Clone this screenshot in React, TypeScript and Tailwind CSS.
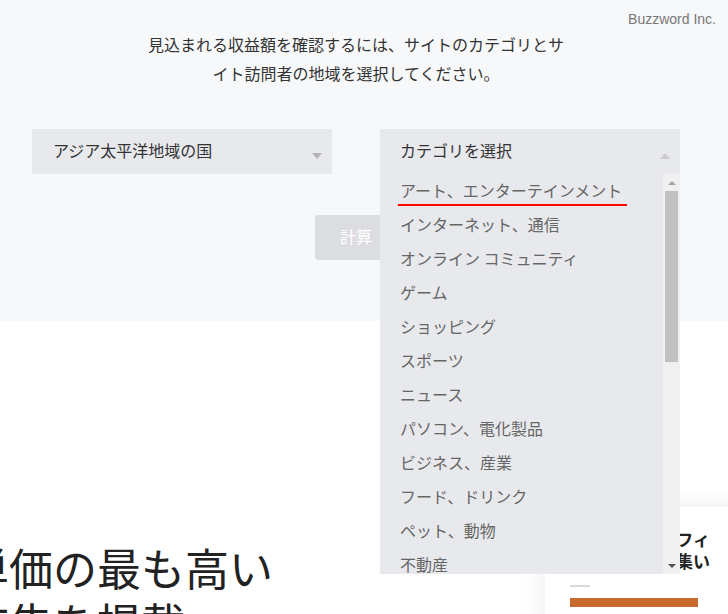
import React from 'react';

const categories = [
  'アート、エンターテインメント',
  'インターネット、通信',
  'オンライン コミュニティ',
  'ゲーム',
  'ショッピング',
  'スポーツ',
  'ニュース',
  'パソコン、電化製品',
  'ビジネス、産業',
  'フード、ドリンク',
  'ペット、動物',
  '不動産',
];

function Caret({ up, color }: { up?: boolean; color: string }) {
  return (
    <svg width="10" height="6" viewBox="0 0 10 6" className="shrink-0">
      <polygon points={up ? '0,6 10,6 5,0' : '0,0 10,0 5,6'} fill={color} />
    </svg>
  );
}

function ScrollTrack() {
  return (
    <div className="w-[17px] shrink-0 bg-[#f0f0f0] flex flex-col">
      <div className="h-[17px] flex items-center justify-center">
        <svg width="8" height="4" viewBox="0 0 8 4">
          <polygon points="0,4 8,4 4,0" fill="#a3a3a3" />
        </svg>
      </div>
      <div className="mx-[2px] h-[171px] bg-[#c1c1c1]" />
      <div className="flex-1" />
      <div className="h-[17px] flex items-center justify-center">
        <svg width="8" height="4" viewBox="0 0 8 4">
          <polygon points="0,0 8,0 4,4" fill="#505050" />
        </svg>
      </div>
    </div>
  );
}

export default function App() {
  return (
    <div
      className="relative w-[728px] h-[614px] overflow-hidden bg-white"
      style={{ fontFamily: '"Noto Sans CJK JP", "Noto Sans", sans-serif' }}
    >
      {/* watermark */}
      <div
        className="absolute top-[10px] right-[12px] text-[14px] leading-[18px] text-[#777]"
        style={{ fontFamily: '"Liberation Sans", Arial, sans-serif' }}
      >
        Buzzword Inc.
      </div>

      {/* Calculator panel */}
      <div className="h-[321px] bg-[#f7f8fa]">
        <div className="w-[712px] flex flex-col items-center pt-[30px]">
          <p className="w-[424px] text-center text-[16px] leading-[29px] text-[#333]">
            見込まれる収益額を確認するには、サイトのカテゴリとサイト訪問者の地域を選択してください。
          </p>

          <div className="mt-[41px] flex gap-[48px]">
            <div className="w-[300px] h-[45px] bg-[#e8e9ed] flex items-center justify-between pl-[21px] pr-[10px] pb-[4px]">
              <span className="text-[16px] text-[#333]">アジア太平洋地域の国</span>
              <div className="mt-[13px]">
                <Caret color="#b4b4b6" />
              </div>
            </div>

            <div className="relative w-[300px]">
              <div className="h-[45px] bg-[#e8e9ed] flex items-center justify-between pl-[20px] pr-[10px] pb-[4px]">
                <span className="text-[16px] text-[#333]">カテゴリを選択</span>
                <div className="mt-[13px]">
                  <Caret up color="#cacbce" />
                </div>
              </div>

              {/* open list */}
              <div className="absolute left-0 top-full z-10 w-[300px] h-[400px] bg-[#e8e9ed] flex">
                <ul className="flex-1 overflow-hidden">
                  {categories.map((c, i) => (
                    <li
                      key={c}
                      className="relative h-[34px] shrink-0 flex items-center pl-[20px] pb-[3px] text-[16px] text-[#666] whitespace-nowrap"
                    >
                      {c}
                      {i === 0 && (
                        <span className="absolute left-[18px] top-[30px] w-[229px] h-[2px] bg-[#ff0000]" />
                      )}
                    </li>
                  ))}
                </ul>
                <ScrollTrack />
              </div>
            </div>
          </div>

          <button className="mt-[41px] w-[82px] h-[45px] pb-[3px] rounded-[3px] bg-[#dcdde1] text-white text-[16px]">
            計算
          </button>
        </div>
      </div>

      {/* Lower content */}
      <div className="flex items-start pt-[186px]">
        <div className="w-[545px] shrink-0 pt-[33px]">
          <h2 className="ml-[-35px] text-[44px] leading-[55px] text-[#222] whitespace-nowrap">
            単価の最も高い
            <br />
            広告を掲載
          </h2>
        </div>
        <div className="w-[220px] h-[140px] shrink-0 bg-white shadow-[0_0_24px_rgba(0,0,0,0.08)] pl-[25px] pt-[21px]">
          <div className="w-[140px] text-right text-[17px] leading-[22px] font-bold text-[#222] whitespace-nowrap">
            運営者からのフィ
            <br />
            ードバックが集い
          </div>
          <div className="mt-[13px] w-[20px] h-[2px] bg-[#d5dad5]" />
          <div className="mt-[11px] w-[128px] h-[9px] bg-[#c96b2e]" />
        </div>
      </div>
    </div>
  );
}
